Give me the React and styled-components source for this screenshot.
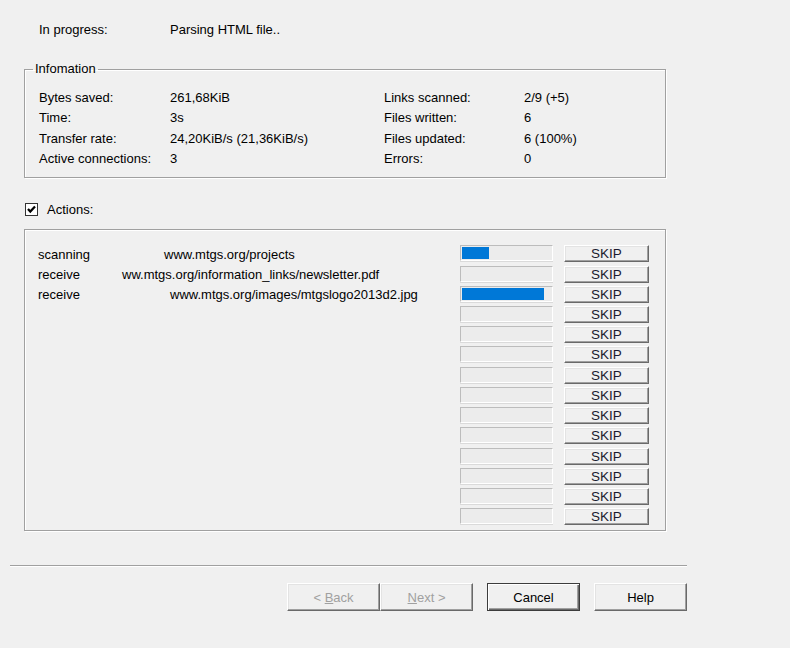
import React from "react"
import styled, { createGlobalStyle } from "styled-components"

const GlobalStyle = createGlobalStyle`
  body {
    margin: 0;
    background: #f0f0f0;
    font-family: "Liberation Sans", Arial, sans-serif;
    font-size: 13px;
    color: #000;
  }
`

const Page = styled.div`
  width: 790px;
  height: 648px;
  box-sizing: border-box;
  padding-top: 22px;
  background: #f0f0f0;
  overflow: hidden;
`

const StatusRow = styled.div`
  display: grid;
  grid-template-columns: 131px auto;
  padding-left: 39px;
  line-height: 16px;
`

const etched = `
  border: 1px solid #a0a0a0;
  box-shadow: inset 1px 1px 0 #fff, 1px 1px 0 #fff;
`

const InfoGroup = styled.fieldset`
  margin: 23px 0 0 24px;
  width: 642px;
  box-sizing: border-box;
  padding: 0;
  min-inline-size: 0;
  ${etched}
`

const Legend = styled.legend`
  margin-left: 8px;
  padding: 0 2px;
  line-height: 16px;
`

const InfoGrid = styled.div`
  display: grid;
  grid-template-columns: 131px 214px 140px 1fr;
  grid-auto-rows: 20.33px;
  align-items: center;
  padding: 11px 0 8px 14px;
  line-height: 16px;
`

const CheckRow = styled.label`
  display: flex;
  align-items: center;
  height: 13px;
  margin: 25px 0 0 25px;
`

const CheckBox = styled.span`
  width: 13px;
  height: 13px;
  box-sizing: border-box;
  border: 1px solid #333;
  background: #fff;
  display: flex;
  align-items: center;
  justify-content: center;
`

const CheckText = styled.span`
  margin-left: 9px;
`

const ActionsBox = styled.div`
  margin: 13px 0 0 24px;
  width: 642px;
  height: 302px;
  box-sizing: border-box;
  padding-top: 15px;
  ${etched}
`

const ActionRow = styled.div`
  display: flex;
  align-items: center;
  height: 20.23px;
  padding-left: 13px;
`

const ActionCell = styled.div`
  display: flex;
  width: 422px;
  margin-top: -2px;
`

const Kind = styled.span`
  width: 84px;
  flex: none;
`

const Url = styled.span`
  margin-left: ${(p) => p.$indent}px;
  white-space: nowrap;
`

const Bar = styled.div`
  width: 93px;
  height: 16px;
  box-sizing: border-box;
  padding: 1px;
  border: 1px solid;
  border-color: #bcbcbc #fff #fff #bcbcbc;
  box-shadow: 0 1px 0 #dadada;
  background: #ececec;
  align-self: flex-start;
`

const Fill = styled.div`
  height: 100%;
  background: #0078d7;
`

const raised = `
  border: 1px solid;
  border-color: #fff #696969 #696969 #fff;
  box-shadow: inset -1px -1px 0 #a0a0a0, inset 1px 1px 0 #e3e3e3;
  background: #f0f0f0;
  font-family: "Liberation Sans", Arial, sans-serif;
  font-size: 13px;
  box-sizing: border-box;
  padding: 0;
`

const SkipButton = styled.button`
  ${raised}
  width: 85px;
  height: 17px;
  margin-left: 11px;
  align-self: flex-start;
  line-height: 15px;
  font-size: 13.5px;
  color: #1a1a2e;
`

const Separator = styled.div`
  margin: 34px 0 0 10px;
  width: 677px;
  border-top: 1px solid #a0a0a0;
  border-bottom: 1px solid #fff;
`

const ButtonBar = styled.div`
  display: flex;
  margin: 16px 0 0 287px;
`

const DialogButton = styled.button`
  ${raised}
  width: 93px;
  height: 28px;
  margin-left: ${(p) => p.$gap || 0}px;
  color: ${(p) => (p.disabled ? "#a0a0a0" : "#000")};
  ${(p) =>
    p.$default &&
    `
    border-color: #3c3c3c;
    box-shadow: inset 1px 1px 0 #fff, inset -1px -1px 0 #696969, inset -2px -2px 0 #a0a0a0;
  `}

  u {
    text-decoration: underline;
  }
`

const info = [
  ["Bytes saved:", "261,68KiB", "Links scanned:", "2/9 (+5)"],
  ["Time:", "3s", "Files written:", "6"],
  ["Transfer rate:", "24,20KiB/s (21,36KiB/s)", "Files updated:", "6 (100%)"],
  ["Active connections:", "3", "Errors:", "0"],
]

const actions = [
  { kind: "scanning", url: "www.mtgs.org/projects", indent: 42, progress: 27 },
  { kind: "receive", url: "ww.mtgs.org/information_links/newsletter.pdf", indent: 0, progress: 0 },
  { kind: "receive", url: "www.mtgs.org/images/mtgslogo2013d2.jpg", indent: 48, progress: 82 },
]

const rows = Array.from({ length: 14 }, (_, i) => actions[i] || null)

const App = () => (
  <Page>
    <GlobalStyle />
    <StatusRow>
      <span>In progress:</span>
      <span>Parsing HTML file..</span>
    </StatusRow>

    <InfoGroup>
      <Legend>Infomation</Legend>
      <InfoGrid>
        {info.map((r) => r.map((c, j) => <span key={r[0] + j}>{c}</span>))}
      </InfoGrid>
    </InfoGroup>

    <CheckRow>
      <CheckBox>
        <svg width="9" height="9" viewBox="0 0 9 9">
          <path d="M1 4 L3.3 6.6 L8 1.4" fill="none" stroke="#000" strokeWidth="2.2" />
        </svg>
      </CheckBox>
      <CheckText>Actions:</CheckText>
    </CheckRow>

    <ActionsBox>
      {rows.map((a, i) => (
        <ActionRow key={i}>
          <ActionCell>
            {a && (
              <>
                <Kind>{a.kind}</Kind>
                <Url $indent={a.indent}>{a.url}</Url>
              </>
            )}
          </ActionCell>
          <Bar>{a && a.progress > 0 && <Fill style={{ width: a.progress }} />}</Bar>
          <SkipButton>SKIP</SkipButton>
        </ActionRow>
      ))}
    </ActionsBox>

    <Separator />

    <ButtonBar>
      <DialogButton disabled>
        &lt; <u>B</u>ack
      </DialogButton>
      <DialogButton disabled>
        <u>N</u>ext &gt;
      </DialogButton>
      <DialogButton $gap={14} $default>
        Cancel
      </DialogButton>
      <DialogButton $gap={14}>Help</DialogButton>
    </ButtonBar>
  </Page>
)

export default App
